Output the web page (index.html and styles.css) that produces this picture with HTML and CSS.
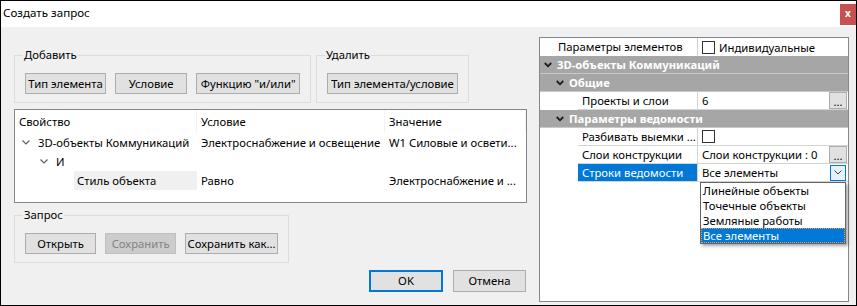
FILE: index.html
```html
<!DOCTYPE html>
<html lang="ru">
<head>
<meta charset="utf-8">
<title>Создать запрос</title>
<link rel="stylesheet" href="styles.css">
</head>
<body>
<div class="window">
  <div class="titlebar">
    <span class="title">Создать запрос</span>
    <span class="close">x</span>
  </div>
  <div class="client">
    <div class="left">
      <div class="top-groups">
        <fieldset class="group g-add">
          <legend>Добавить</legend>
          <button class="btn w-type">Тип элемента</button>
          <button class="btn w-cond">Условие</button>
          <button class="btn w-func">Функцию "и/или"</button>
        </fieldset>
        <fieldset class="group g-del">
          <legend>Удалить</legend>
          <button class="btn w-del">Тип элемента/условие</button>
        </fieldset>
      </div>
      <div class="tree">
        <div class="tr head"><div class="c">Свойство</div><div class="c">Условие</div><div class="c">Значение</div></div>
        <div class="tr"><div class="c lvl0"><svg class="tchev" width="8" height="5" viewBox="0 0 8 5"><polyline points="0.5,0.5 4,4 7.5,0.5" fill="none" stroke="#606060" stroke-width="1.2"/></svg>3D-объекты Коммуникаций</div><div class="c">Электроснабжение и освещение</div><div class="c">W1 Силовые и освети...</div></div>
        <div class="tr"><div class="c lvl1"><svg class="tchev" width="8" height="5" viewBox="0 0 8 5"><polyline points="0.5,0.5 4,4 7.5,0.5" fill="none" stroke="#606060" stroke-width="1.2"/></svg>И</div><div class="c"></div><div class="c"></div></div>
        <div class="tr"><div class="c lvl2"><span class="hl">Стиль объекта</span></div><div class="c">Равно</div><div class="c">Электроснабжение и ...</div></div>
      </div>
      <fieldset class="group g-query">
        <legend>Запрос</legend>
        <button class="btn w-open">Открыть</button>
        <button class="btn w-save" disabled>Сохранить</button>
        <button class="btn w-saveas">Сохранить как...</button>
      </fieldset>
      <div class="dlg-btns">
        <button class="btn w-ok">OK</button>
        <button class="btn w-cancel">Отмена</button>
      </div>
    </div>
    <div class="pgrid">
      <div class="prow top"><div class="plabel">Параметры элементов</div><div class="pval"><span class="chk"></span>Индивидуальные</div></div>
      <div class="pcat l0"><svg class="pchev" width="8" height="6" viewBox="0 0 8 6"><polyline points="0.8,1 4,4.3 7.2,1" fill="none" stroke="#1a1a1a" stroke-width="1.8"/></svg>3D-объекты Коммуникаций</div>
      <div class="pcat l1"><svg class="pchev" width="8" height="6" viewBox="0 0 8 6"><polyline points="0.8,1 4,4.3 7.2,1" fill="none" stroke="#1a1a1a" stroke-width="1.8"/></svg>Общие</div>
      <div class="prow child"><div class="plabel">Проекты и слои</div><div class="pval"><span class="vtext">6</span><span class="dots">...</span></div></div>
      <div class="pcat l1"><svg class="pchev" width="8" height="6" viewBox="0 0 8 6"><polyline points="0.8,1 4,4.3 7.2,1" fill="none" stroke="#1a1a1a" stroke-width="1.8"/></svg>Параметры ведомости</div>
      <div class="prow child"><div class="plabel">Разбивать выемки ...</div><div class="pval"><span class="chk"></span></div></div>
      <div class="prow child"><div class="plabel">Слои конструкции</div><div class="pval"><span class="vtext">Слои конструкции : 0</span><span class="dots">...</span></div></div>
      <div class="prow child sel"><div class="plabel">Строки ведомости</div><div class="pval"><span class="vtext">Все элементы</span><span class="ddbtn"><svg width="8" height="5" viewBox="0 0 8 5"><polyline points="0.5,0.5 4,4 7.5,0.5" fill="none" stroke="#404040" stroke-width="1"/></svg></span></div></div>
      <ul class="dropdown">
        <li>Линейные объекты</li>
        <li>Точечные объекты</li>
        <li>Земляные работы</li>
        <li class="cur">Все элементы</li>
      </ul>
    </div>
  </div>
</div>
</body>
</html>
```
FILE: styles.css
```css
* { box-sizing: border-box; }
html, body { margin: 0; padding: 0; }
body {
  font-family: "Noto Sans", "Open Sans", sans-serif;
  font-size: 11.3px;
  color: #000;
  background: #f0f0f0;
}
.window {
  width: 857px;
  height: 306px;
  border: 1px solid #000;
  background: #f0f0f0;
  display: flex;
  flex-direction: column;
}
.titlebar {
  height: 26px;
  background: #fff;
  display: flex;
  justify-content: space-between;
  align-items: flex-start;
  flex: none;
}
.title {
  margin: 4px 0 0 2px;
  line-height: 15px;
  font-size: 11.6px;
}
.close {
  margin-top: 3px;
  width: 16px;
  height: 21px;
  background: #c75050;
  color: #fff;
  font-weight: bold;
  font-size: 10px;
  line-height: 19px;
  text-align: center;
}
.client {
  flex: 1;
  display: flex;
  align-items: flex-start;
}
.left {
  width: 526px;
  padding-left: 13px;
  padding-top: 21px;
  display: flex;
  flex-direction: column;
}
.top-groups {
  display: flex;
  gap: 5px;
}
.group {
  margin: 0;
  border: 1px solid #dcdcdc;
  padding: 11px 10px 8px 10px;
  display: flex;
  gap: 8px;
  min-width: 0;
}
.group legend {
  padding: 0 1px;
  margin-left: -2px;
  line-height: 14px;
  font-size: 11.3px;
}
.g-add { width: 297px; gap: 8px; }
.g-del { width: 153px; }
.btn {
  font-family: inherit;
  font-size: 11.3px;
  color: #000;
  background: #e1e1e1;
  border: 1px solid #adadad;
  height: 21px;
  padding: 0;
  margin: 0;
  line-height: 18px;
  white-space: nowrap;
}
.w-type { width: 82px; }
.w-cond { width: 73px; margin-left: 1px; }
.w-func { width: 105px; margin-left: 1px; }
.w-del { width: 131px; }
.w-open { width: 72px; }
.w-save { width: 72px; margin-left: 1px; background: #cccccc; border-color: #bfbfbf; color: #838383; }
.w-saveas { width: 94px; margin-left: 1px; }

.tree {
  margin-top: 6px;
  width: 513px;
  height: 94px;
  border: 1px solid #828790;
  background: #fff;
}
.tr {
  display: grid;
  grid-template-columns: 182px 188px 1fr;
  height: 19px;
  align-items: stretch;
}
.tr.head { height: 23px; }
.tr.head .c { border-right: 1px solid #f2f2f2; }
.c {
  padding-left: 4px;
  white-space: nowrap;
  overflow: hidden;
  display: flex;
  align-items: center;
  line-height: 15px;
}
.lvl0 { padding-left: 7px; }
.lvl1 { padding-left: 25px; }
.lvl2 { padding-left: 59px; }
.tchev { margin-right: 8px; flex: none; }
.hl {
  background: #f0f0f0;
  align-self: stretch;
  flex: 1;
  padding-left: 3px;
  display: flex;
  align-items: center;
}

.g-query {
  margin-top: 5px;
  width: 275px;
}
.dlg-btns {
  margin-top: 7px;
  display: flex;
  justify-content: flex-end;
  gap: 10px;
  padding-right: 1px;
}
.w-ok { width: 74px; height: 22px; border: 2px solid #0078d7; }
.w-cancel { width: 73px; height: 22px; }

.pgrid {
  position: relative;
  margin-top: 10px;
  margin-left: 12px;
  width: 310px;
  height: 265px;
  border: 1px solid #828790;
  background: #fff;
}
.prow {
  height: 18px;
  display: flex;
}
.plabel {
  white-space: nowrap;
  overflow: hidden;
  line-height: 17px;
  flex: none;
}
.prow.top .plabel { width: 157px; padding-left: 18px; }
.prow.child { padding-left: 38px; }
.prow.child .plabel {
  width: 119px;
  padding-left: 4px;
  border-bottom: 1px solid #d4d4d4;
}
.pval {
  flex: 1;
  border-left: 1px solid #d4d4d4;
  border-bottom: 1px solid #d4d4d4;
  padding-left: 4px;
  padding-right: 1px;
  display: flex;
  align-items: center;
  line-height: 17px;
  white-space: nowrap;
}
.prow.top .pval { border-bottom: none; }
.vtext { flex: 1; }
.chk {
  width: 13px;
  height: 13px;
  border: 1px solid #333;
  background: #fff;
  margin-right: 4px;
  flex: none;
}
.dots {
  width: 18px;
  height: 17px;
  background: #e1e1e1;
  border: 1px solid #adadad;
  font-size: 11px;
  line-height: 17px;
  text-align: center;
  align-self: flex-start;
}
.ddbtn {
  width: 16px;
  height: 16px;
  background: #e5f1fb;
  border: 1px solid #0078d7;
  display: flex;
  align-items: center;
  justify-content: center;
  margin-right: 1px;
}
.prow.sel .plabel { background: #0078d7; color: #fff; }
.pcat {
  height: 18px;
  background: #a6a6a6;
  color: #fff;
  font-weight: bold;
  display: flex;
  align-items: center;
  line-height: 17px;
  border-bottom: 1px solid #c8c8c8;
  white-space: nowrap;
}
.pcat.l0 { padding-left: 4px; }
.pcat.l1 { padding-left: 16px; }
.pchev { margin-right: 5px; flex: none; }
.dropdown {
  position: absolute;
  left: 160px;
  top: 144px;
  width: 146px;
  margin: 0;
  padding: 0;
  list-style: none;
  background: #fff;
  border: 1px solid #646464;
  box-shadow: 2px 2px 3px rgba(0,0,0,0.35);
}
.dropdown li {
  height: 15px;
  line-height: 15px;
  padding-left: 2px;
}
.dropdown li.cur {
  background: #0078d7;
  color: #fff;
  outline: 1px dotted #e8a040;
  outline-offset: -1px;
}
```
